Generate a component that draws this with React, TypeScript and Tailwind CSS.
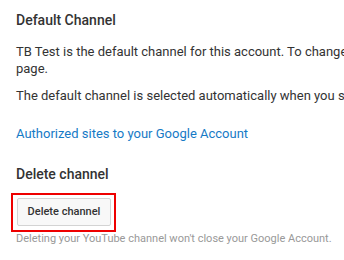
import React from "react";

const App = () => {
  return (
    <div className="w-[344px] h-[260px] overflow-hidden bg-white pl-4 font-['Roboto',sans-serif]">
      {/* Default channel */}
      <h2 className="pt-[12px] text-[14px] leading-[17px] font-medium text-[#333] whitespace-nowrap">
        Default Channel
      </h2>
      <p className="mt-[14px] text-[13px] leading-[17px] text-[#333] whitespace-nowrap">
        TB Test is the default channel for this account. To change it, go to the
        channel switcher
        <br />
        page.
      </p>
      <p className="mt-[10px] text-[13px] leading-[17px] text-[#333] whitespace-nowrap">
        The default channel is selected automatically when you sign in.
      </p>

      <a
        href="#"
        className="block mt-[21px] text-[13px] leading-[17px] text-[#167ac6] whitespace-nowrap"
      >
        Authorized sites to your Google Account
      </a>

      {/* Delete channel */}
      <h2 className="mt-[24px] text-[14px] leading-[17px] font-medium text-[#333] whitespace-nowrap">
        Delete channel
      </h2>
      <div className="mt-[10px] -ml-[5px] w-[105px] h-[39px] border-2 border-[#e00] pt-[3px] pl-[4px]">
        <button
          type="button"
          className="w-[94px] h-[28px] border border-[#d3d3d3] rounded-[2px] bg-[#f8f8f8] text-[11px] font-medium text-[#333]"
        >
          Delete channel
        </button>
      </div>
      <p className="text-[11px] leading-[13px] text-[#999] whitespace-nowrap">
        Deleting your YouTube channel won't close your Google Account.
      </p>
    </div>
  );
};

export default App;
